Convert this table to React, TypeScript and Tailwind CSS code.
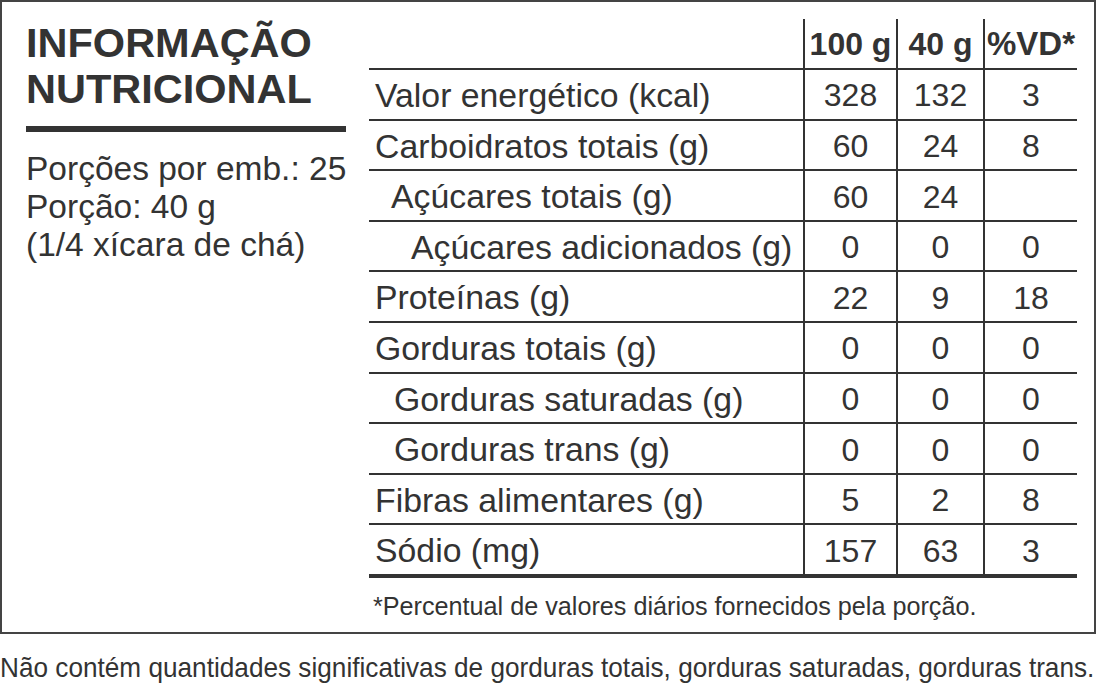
const rows = [
  { label: 'Valor energético (kcal)', indent: 0, a: '328', b: '132', c: '3' },
  { label: 'Carboidratos totais (g)', indent: 0, a: '60', b: '24', c: '8' },
  { label: 'Açúcares totais (g)', indent: 1, a: '60', b: '24', c: '' },
  { label: 'Açúcares adicionados (g)', indent: 3, a: '0', b: '0', c: '0' },
  { label: 'Proteínas (g)', indent: 0, a: '22', b: '9', c: '18' },
  { label: 'Gorduras totais (g)', indent: 0, a: '0', b: '0', c: '0' },
  { label: 'Gorduras saturadas (g)', indent: 2, a: '0', b: '0', c: '0' },
  { label: 'Gorduras trans (g)', indent: 2, a: '0', b: '0', c: '0' },
  { label: 'Fibras alimentares (g)', indent: 0, a: '5', b: '2', c: '8' },
  { label: 'Sódio (mg)', indent: 0, a: '157', b: '63', c: '3' },
];

const INDENTS = ['pl-[6px]', 'pl-[22px]', 'pl-[25px]', 'pl-[42px]'];

export default function App() {
  return (
    <div className="w-[1097px] h-[689px] bg-white text-[#333] font-['Liberation_Sans',Arial,sans-serif] overflow-hidden">
      {/* caixa da tabela */}
      <div className="w-[1096px] h-[634px] border-2 border-[#444] flex">
        {/* título + porções */}
        <div className="w-[367px] pl-[24px] pt-[18px]">
          <h1 className="text-[41.5px] leading-[46px] font-bold">
            INFORMAÇÃO
            <br />
            NUTRICIONAL
          </h1>
          <div className="mt-[14px] h-[6px] w-[320px] bg-[#333]" />
          <div className="mt-[18px] text-[33.5px] leading-[38px]">
            <p>Porções por emb.: 25</p>
            <p>Porção: 40 g</p>
            <p>(1/4 xícara de chá)</p>
          </div>
        </div>

        {/* tabela */}
        <div className="pt-[17px] w-[708px]">
          <div className="grid grid-cols-[434px_93px_87px_94px] h-[49px] text-[32px] font-bold">
            <div />
            <div className="border-l-2 border-[#333] flex items-center justify-center pb-[2px]">100 g</div>
            <div className="border-l-2 border-[#333] flex items-center justify-center pb-[2px]">40 g</div>
            <div className="border-l-2 border-[#333] flex items-center justify-center pb-[2px] text-[33px]">%VD*</div>
          </div>
          {rows.map((r) => (
            <div
              key={r.label}
              className="grid grid-cols-[434px_93px_87px_94px] h-[50.6px] border-t-2 border-[#333] text-[32px]"
            >
              <div className={`flex items-center text-[33.8px] whitespace-nowrap ${INDENTS[r.indent]}`}>{r.label}</div>
              <div className="border-l-2 border-[#333] flex items-center justify-center">{r.a}</div>
              <div className="border-l-2 border-[#333] flex items-center justify-center">{r.b}</div>
              <div className="border-l-2 border-[#333] flex items-center justify-center">{r.c}</div>
            </div>
          ))}
          <div className="h-[4px] bg-[#333]" />
          <p className="mt-[14px] pl-[4px] text-[25.2px] leading-[28px] whitespace-nowrap">
            *Percentual de valores diários fornecidos pela porção.
          </p>
        </div>
      </div>

      <p className="mt-[18px] text-[28px] leading-[32px] whitespace-nowrap origin-left scale-x-[0.935]">
        Não contém quantidades significativas de gorduras totais, gorduras saturadas, gorduras trans.
      </p>
    </div>
  );
}
